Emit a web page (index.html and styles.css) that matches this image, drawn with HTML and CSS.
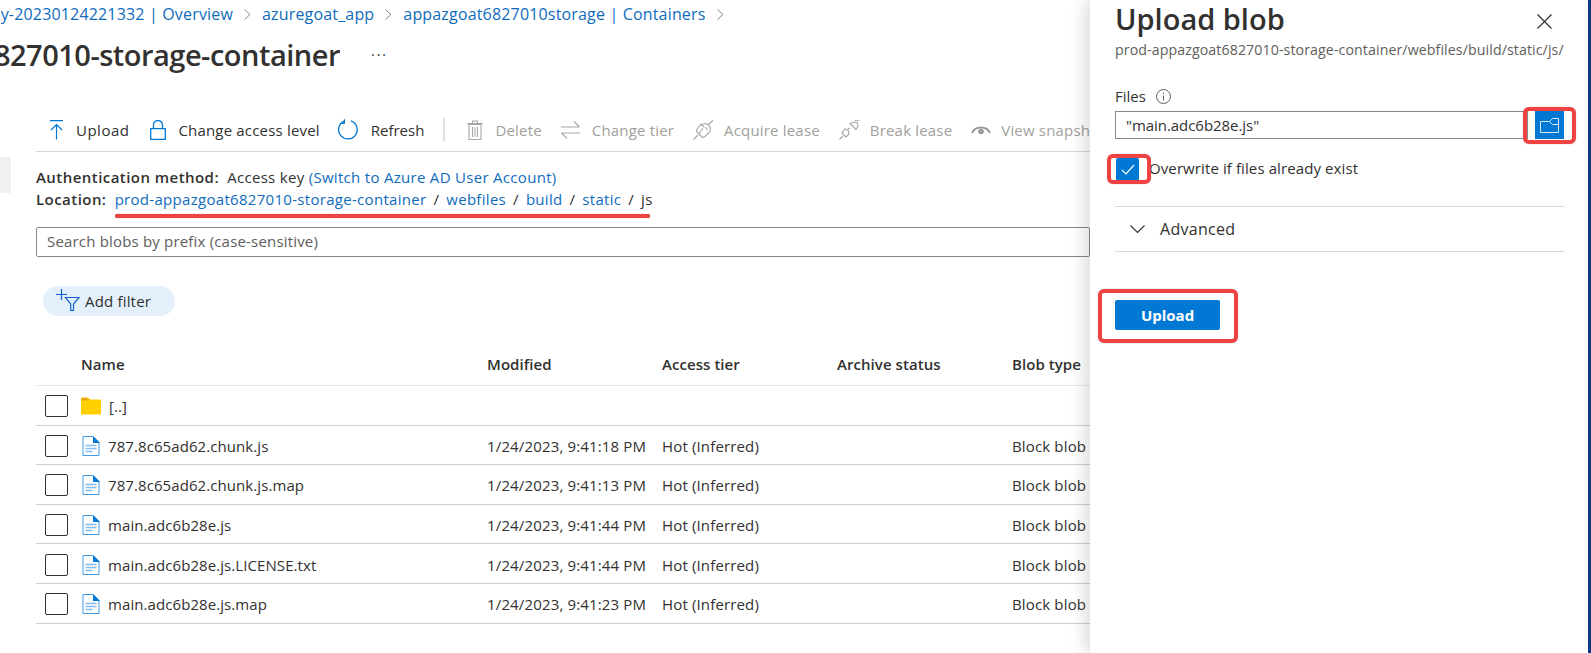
FILE: index.html
```html
<!DOCTYPE html>
<html lang="en">
<head>
<meta charset="utf-8">
<title>Upload blob</title>
<link rel="stylesheet" href="styles.css">
</head>
<body>
<svg class="defs" width="0" height="0" aria-hidden="true">
  <defs>
    <symbol id="file" viewBox="0 0 18 20">
      <path d="M1 .5h10l6 6v13H1z" fill="#fff" stroke="#3f9ae6"/>
      <path d="M11 0l7 7h-7z" fill="#0078d4"/>
      <path d="M3.500 9.500h11M3.500 12.500h11M3.500 15.500h7" stroke="#83bdee" stroke-width="1.600" fill="none"/>
    </symbol>
    <symbol id="chev" viewBox="0 0 7 11">
      <path d="M.5.500l5.500 5-5.500 5" fill="none" stroke="#8a8886" stroke-width="1"/>
    </symbol>
  </defs>
</svg>
<div class="page">
  <main class="main">
    <nav class="crumbs">
      <a class="crumb first"><span>ay-20230124221332 | Overview</span></a><svg class="sep-chev" width="7" height="11"><use href="#chev"/></svg><a class="crumb">azuregoat_app</a><svg class="sep-chev" width="7" height="11"><use href="#chev"/></svg><a class="crumb">appazgoat6827010storage | Containers</a><svg class="sep-chev" width="7" height="11"><use href="#chev"/></svg>
    </nav>
    <div class="title-row">
      <h1 class="title"><span>prod-appazgoat6827010-storage-container</span></h1>
      <span class="more">···</span>
    </div>
    <div class="body-row">
      <aside class="rail"><div class="rail-item"></div></aside>
      <section class="content">
        <div class="toolbar">
          <span class="tool up">
            <svg width="13" height="20" viewBox="0 0 13 20"><path d="M0 .7h13M6.500 19.500V4.500M1 10l5.500-5.500L12 10" fill="none" stroke="#0078d4" stroke-width="1.200"/></svg>Upload</span>
          <span class="tool lock">
            <svg width="16" height="20" viewBox="0 0 16 20"><path d="M.7 8.700h14.600v10.600H.7zM3.500 8.500V5a4.500 4.500 0 0 1 9 0v3.500" fill="none" stroke="#0078d4" stroke-width="1.300"/></svg>Change access level</span>
          <span class="tool refresh">
            <svg width="21" height="21" viewBox="0 0 21 21"><path d="M12.800 1.800a9.300 9.300 0 1 1-6.800.4M6.500 .3l-.2 3.900-3.800.3" fill="none" stroke="#0078d4" stroke-width="1.300"/></svg>Refresh</span>
          <span class="tool-sep"></span>
          <span class="tool off del">
            <svg width="16" height="20" viewBox="0 0 16 20"><path d="M2 4.500h12v15H2zM0 3.500h16M5.500 3V1h5v2M5.500 7v10M8 7v10M10.500 7v10" fill="none" stroke="#a6a6a6" stroke-width="1.100"/></svg>Delete</span>
          <span class="tool off tier">
            <svg width="19" height="20" viewBox="0 0 19 20"><path d="M0 7h18M13 1.500L18.500 7M1 13h18M6 18.500L.5 13" fill="none" stroke="#a6a6a6" stroke-width="1.100"/></svg>Change tier</span>
          <span class="tool off acq">
            <svg width="21" height="20" viewBox="0 0 21 20"><path d="M.5 19.500l4.500-4.500M3.500 11.500l6 6 2.500-1 5-5 .5-3.500-2.500-3.500L12 3.500 7 5.500 4 9zM7.500 3.500l3.500 3.500M12 7l2.500 3M20 .5l-5 4.500M6 14l4-6" fill="none" stroke="#a6a6a6" stroke-width="1.100"/></svg>Acquire lease</span>
          <span class="tool off brk">
            <svg width="21" height="20" viewBox="0 0 21 20"><path d="M.5 19.500l3.500-3.500M3 13l4 4 3-3-1-4-3-1zM11 3.500l6 6 2-3.500-.5-3-3-1zM16 .5l4.500-.5M11 8l-2 1" fill="none" stroke="#a6a6a6" stroke-width="1.100"/></svg>Break lease</span>
          <span class="tool off view">
            <svg width="20" height="20" viewBox="0 0 20 20"><path d="M1 13a9.500 8 0 0 1 18 0" fill="none" stroke="#9a9a9a" stroke-width="2"/><circle cx="10" cy="11.500" r="2.800" fill="#9a9a9a"/></svg>View snapshots</span>
        </div>
        <p class="meta"><b>Authentication method:</b> Access key <a>(Switch to Azure AD User Account)</a></p>
        <p class="meta"><b>Location:</b> <a>prod-appazgoat6827010-storage-container</a><i>/</i><a>webfiles</a><i>/</i><a>build</a><i>/</i><a>static</a><i>/</i>js</p>
        <div class="search">Search blobs by prefix (case-sensitive)</div>
        <span class="filter">
          <svg width="24" height="26" viewBox="0 0 24 26"><path d="M0 6.500h11M5.500 1v11" fill="none" stroke="#0f62c9" stroke-width="1.200"/><path d="M9.500 9.500h13.500l-5.500 6.500v6.500h-2.800V16z" fill="none" stroke="#0f62c9" stroke-width="1.200"/></svg>Add filter</span>
        <div class="grid">
          <div class="row head"><span></span><span class="head-name">Name</span><span>Modified</span><span>Access tier</span><span>Archive status</span><span>Blob type</span></div>
          <div class="row">
            <span class="box"></span>
            <span class="name"><svg class="folder" width="20" height="18" viewBox="0 0 20 18"><path d="M0 1.500A1 1 0 0 1 1 .5h6l2 2h11v15H0z" fill="#ffcf00"/><path d="M0 3.500h8L9 2.500H7L6 1H1z" fill="#e8a908"/></svg>[..]</span>
            <span></span><span></span><span></span><span></span>
          </div>
          <div class="row">
            <span class="box"></span>
            <span class="name"><svg class="fileic" width="18" height="20"><use href="#file"/></svg>787.8c65ad62.chunk.js</span>
            <span>1/24/2023, 9:41:18 PM</span><span>Hot (Inferred)</span><span></span><span>Block blob</span>
          </div>
          <div class="row">
            <span class="box"></span>
            <span class="name"><svg class="fileic" width="18" height="20"><use href="#file"/></svg>787.8c65ad62.chunk.js.map</span>
            <span>1/24/2023, 9:41:13 PM</span><span>Hot (Inferred)</span><span></span><span>Block blob</span>
          </div>
          <div class="row">
            <span class="box"></span>
            <span class="name"><svg class="fileic" width="18" height="20"><use href="#file"/></svg>main.adc6b28e.js</span>
            <span>1/24/2023, 9:41:44 PM</span><span>Hot (Inferred)</span><span></span><span>Block blob</span>
          </div>
          <div class="row">
            <span class="box"></span>
            <span class="name"><svg class="fileic" width="18" height="20"><use href="#file"/></svg>main.adc6b28e.js.LICENSE.txt</span>
            <span>1/24/2023, 9:41:44 PM</span><span>Hot (Inferred)</span><span></span><span>Block blob</span>
          </div>
          <div class="row">
            <span class="box"></span>
            <span class="name"><svg class="fileic" width="18" height="20"><use href="#file"/></svg>main.adc6b28e.js.map</span>
            <span>1/24/2023, 9:41:23 PM</span><span>Hot (Inferred)</span><span></span><span>Block blob</span>
          </div>
        </div>
      </section>
    </div>
  </main>
  <aside class="panel">
    <div class="panel-head">
      <h2 class="panel-title">Upload blob</h2>
      <svg class="close" width="15" height="15" viewBox="0 0 15 15"><path d="M.5.500l14 14M14.500.500l-14 14" stroke="#323130" stroke-width="1.200" fill="none"/></svg>
    </div>
    <div class="panel-path">prod-appazgoat6827010-storage-container/webfiles/build/static/js/</div>
    <div class="field-label">Files
      <svg width="15" height="15" viewBox="0 0 15 15"><circle cx="7.500" cy="7.500" r="7" fill="none" stroke="#605e5c"/><path d="M7.500 6.500v5M7.500 3.500v1.400" stroke="#605e5c" fill="none"/></svg>
    </div>
    <div class="file-row">
      <div class="file-input">"main.adc6b28e.js"</div>
      <span class="browse"><svg width="19" height="15" viewBox="0 0 19 15"><path d="M.5 3.500h9l3-3h6v14H.5zM9.500 3.500l3 3h6" fill="none" stroke="#d6e9f8" stroke-width="1"/></svg></span>
    </div>
    <div class="check-row">
      <span class="check"><svg width="14" height="11" viewBox="0 0 14 11"><path d="M1 6l4 4 8-9" fill="none" stroke="#fff" stroke-width="1.200"/></svg></span>
      <span class="check-label">Overwrite if files already exist</span>
    </div>
    <div class="advanced">
      <svg width="15" height="8" viewBox="0 0 15 8"><path d="M.5.500l7 7 7-7" fill="none" stroke="#323130" stroke-width="1.100"/></svg>
      <span>Advanced</span>
    </div>
    <button class="primary" type="button">Upload</button>
  </aside>
  <div class="edge"></div>
  <div class="mark underline"></div>
  <div class="mark m-browse"></div>
  <div class="mark m-check"></div>
  <div class="mark m-upload"></div>
</div>
</body>
</html>
```
FILE: styles.css
```css
* { box-sizing: border-box; }
html, body { margin: 0; padding: 0; }
body { font-family: "Open Sans", "Noto Sans", sans-serif; font-size: 15px; color: #323130; background: #fff; overflow: hidden; }
.defs { position: absolute; }
.page { position: relative; display: flex; width: 1591px; height: 653px; overflow: hidden; }
a { color: #0f6cbd; }

.main { width: 1090px; flex: none; overflow: hidden; }
.crumbs { height: 28px; display: flex; align-items: center; white-space: nowrap; font-size: 16px; letter-spacing: .17px; }
.crumb { color: #0f6cbd; }
.crumb.first { width: 233px; flex: none; display: flex; justify-content: flex-end; overflow: hidden; }
.crumb.first span { flex: none; }
.sep-chev { margin: 0 11px; flex: none; }

.title-row { height: 54px; padding-top: 7px; display: flex; align-items: flex-start; }
.title { margin: 0; width: 340px; flex: none; display: flex; justify-content: flex-end; overflow: hidden; white-space: nowrap; font-size: 29px; line-height: 40px; font-weight: 600; letter-spacing: -.5px; color: #323130; }
.title span { flex: none; }
.more { margin-left: 31px; line-height: 40px; font-size: 14px; letter-spacing: 2px; color: #323130; }

.body-row { display: flex; height: 571px; margin-top: 26px; }
.rail { width: 36px; flex: none; padding-top: 49px; }
.rail-item { width: 11px; height: 36px; background: #f1f0ef; }
.content { flex: 1; min-width: 0; }

.toolbar { height: 44px; display: flex; align-items: center; border-bottom: 1px solid #d9d9d9; white-space: nowrap; overflow: hidden; padding-left: 14px; }
.tool { display: inline-flex; align-items: center; gap: 12px; letter-spacing: .18px; margin-right: 19px; flex: none; }
.up { gap: 13px; letter-spacing: .5px; margin-right: 21px; }
.lock { margin-right: 18px; }
.refresh { letter-spacing: 0; }
.acq, .brk, .view { gap: 10px; }
.off { color: #a19f9d; }
.tool-sep { width: 2px; height: 23px; background: #e1e0df; margin-right: 22px; flex: none; }

.meta { margin: 0; line-height: 22px; letter-spacing: .3px; white-space: nowrap; }
.toolbar + .meta { margin-top: 14px; }
.meta b { font-weight: 600; margin-right: 4px; letter-spacing: .45px; }
.meta i { font-style: normal; margin: 0 7px; }

.search { height: 30px; margin-top: 17px; padding-left: 10px; line-height: 26px; border: 1px solid #8a8886; border-radius: 2px; color: #605e5c; letter-spacing: .18px; }
.filter { display: inline-flex; align-items: center; gap: 5px; height: 30px; width: 132px; margin: 29px 0 0 7px; padding-left: 13px; border-radius: 15px; background: #e3f0fb; letter-spacing: .18px; }

.grid { margin-top: 26px; }
.row { display: grid; grid-template-columns: 46px 405px 175px 175px 175px 1fr; align-items: center; height: 39.6px; padding-top: 2px; border-bottom: 1px solid #cfcfcf; letter-spacing: .15px; white-space: nowrap; }
.row.head { height: 42px; padding: 0 0 2px; font-weight: 600; letter-spacing: .06px; border-bottom-color: #e9e9e9; }
.head-name { margin-left: -1px; }
.box { width: 23px; height: 22px; margin-left: 9px; border: 1px solid #323130; border-radius: 2px; }
.name { display: flex; align-items: center; gap: 8px; letter-spacing: .08px; }
.folder { margin-left: -1px; }

.panel { flex: 1; padding: 0 24px 0 25px; background: #fff; box-shadow: -6px 0 14px rgba(0,0,0,.13); position: relative; }
.panel-head { height: 40px; display: flex; align-items: center; justify-content: space-between; padding-right: 12px; }
.panel-title { margin: -3px 0 0; font-size: 29px; font-weight: 600; color: #323130; }
.close { margin-top: 3px; }
.panel-path { line-height: 20px; color: #605e5c; font-size: 14.200px; letter-spacing: .09px; white-space: nowrap; }
.field-label { display: flex; align-items: center; gap: 10px; margin-top: 26px; height: 20px; }
.file-row { display: flex; gap: 7px; margin-top: 5px; height: 28px; }
.file-input { flex: 1; border: 1px solid #8a8886; line-height: 26px; padding-left: 10px; letter-spacing: -.05px; }
.browse { width: 29px; display: flex; align-items: center; justify-content: center; background: #0078d4; }
.check-row { display: flex; align-items: center; gap: 10px; margin-top: 19px; height: 23px; margin-left: 1px; letter-spacing: .1px; }
.check-label { line-height: 21px; margin-bottom: 2px; }
.check { width: 23px; height: 23px; display: flex; align-items: center; justify-content: center; background: #0078d4; border-radius: 2px; }
.advanced { display: flex; align-items: center; gap: 15px; height: 46px; margin-top: 25px; padding-left: 15px; border-top: 1px solid #d9d9d9; border-bottom: 1px solid #d9d9d9; font-size: 16px; letter-spacing: .3px; }
.primary { display: block; width: 105px; height: 30px; margin-top: 48px; border: 0; border-radius: 2px; background: #0078d4; color: #fff; font: 700 15px "Open Sans", sans-serif; }

.edge { width: 3px; flex: none; background: #0b3a8c; }

.mark { position: absolute; border: 4px solid #ef4242; border-radius: 6px; box-shadow: 0 0 1px #777; }
.underline { left: 115px; top: 214px; width: 535px; height: 4px; border: 0; background: #ef4242; border-radius: 2px; }
.m-browse { left: 1523px; top: 107px; width: 53px; height: 37px; }
.m-check { left: 1107px; top: 154px; width: 44px; height: 30px; }
.m-upload { left: 1098px; top: 289px; width: 140px; height: 54px; }
```
